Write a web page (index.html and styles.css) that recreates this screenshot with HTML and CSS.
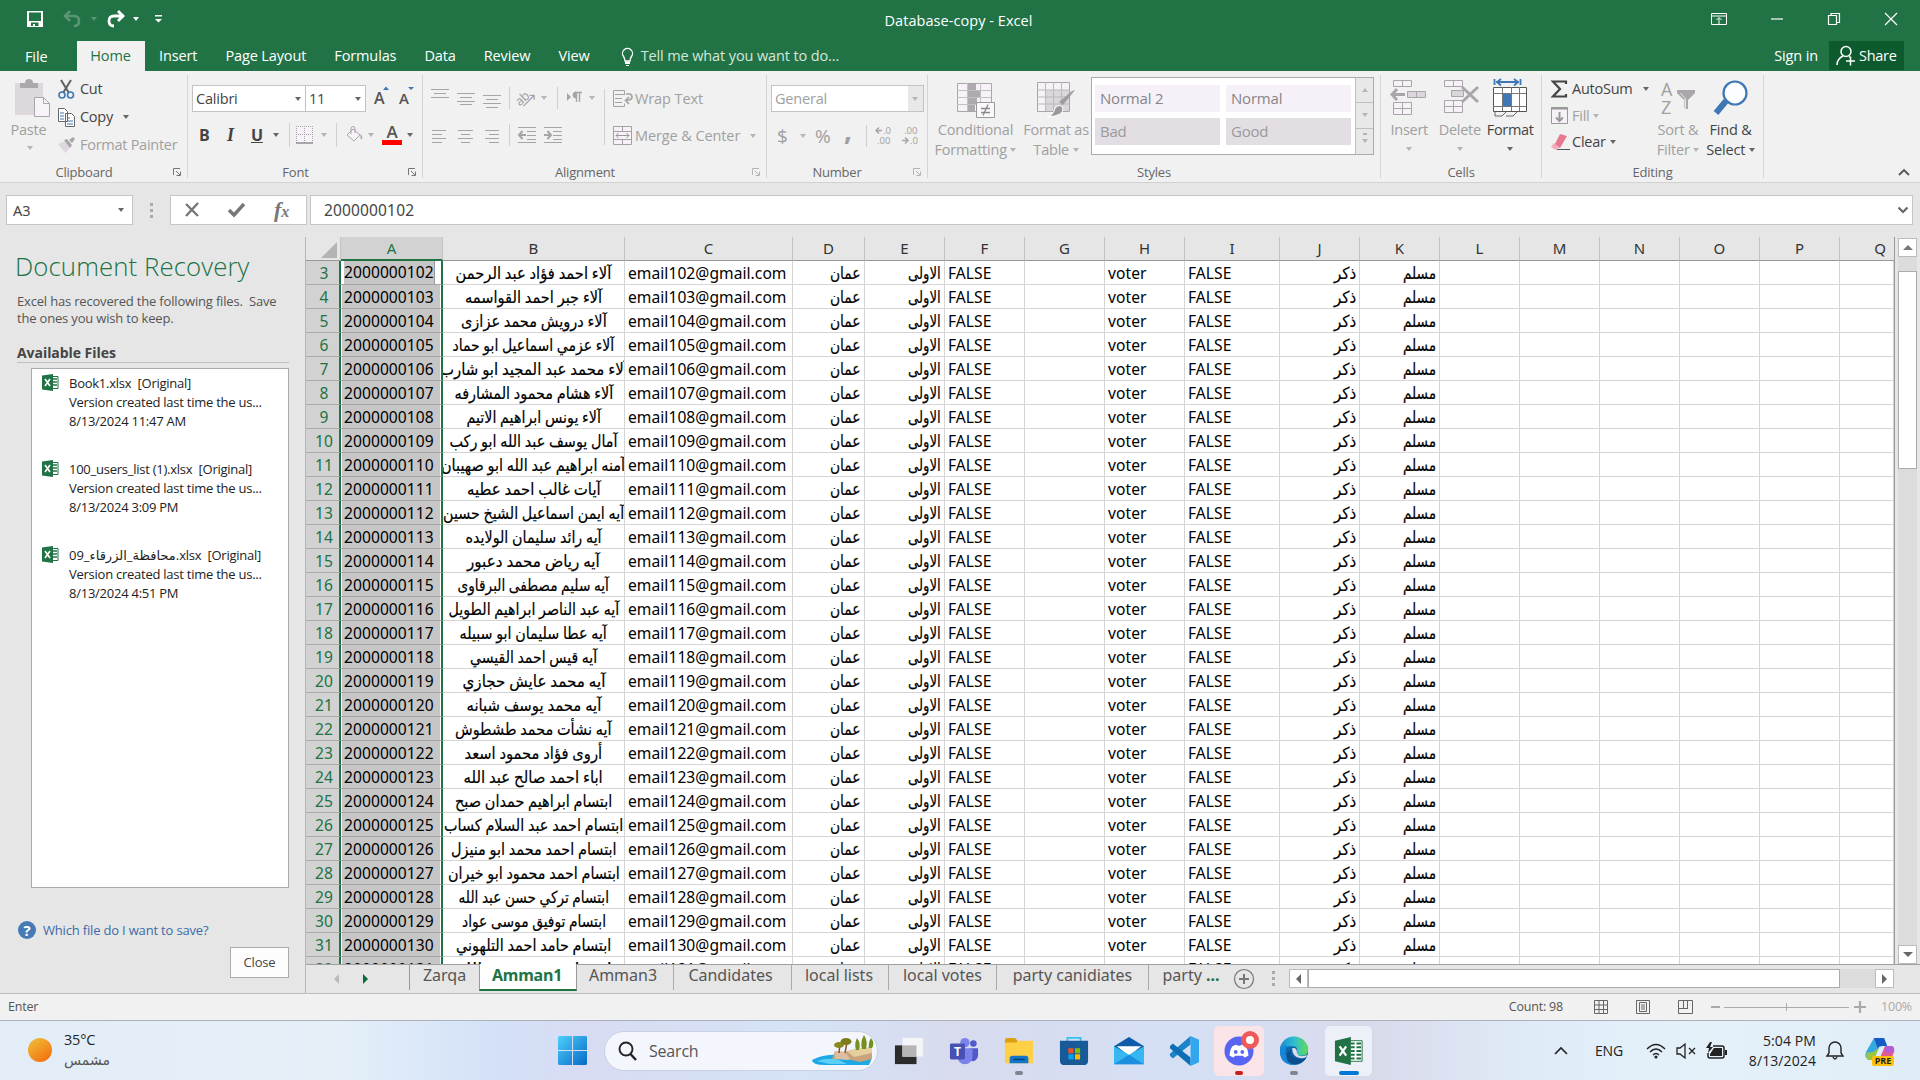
FILE: index.html
```html
<!DOCTYPE html>
<html lang="en">
<head>
<meta charset="utf-8">
<title>Database-copy - Excel</title>
<link rel="stylesheet" href="styles.css">
</head>
<body>
<header class="titlebar">
  <div class="quick">
    <svg width="16" height="16" viewBox="0 0 16 16"><path fill="#fff" fill-rule="evenodd" d="M0 0h16v16H0zM2 1.500v8.500h12V1.500zM4 11.500V15h2v-2h2v2h3.500v-3.500z"/></svg>
    <svg class="dim" width="18" height="16" viewBox="0 0 18 16"><path d="M1 5h10q5 0 5 5t-5 5M7 0L2 5l5 5" fill="none" stroke="#fff" stroke-width="2.600"/></svg>
    <i class="caret dim white"></i>
    <svg width="18" height="16" viewBox="0 0 18 16"><path d="M17 5H7Q2 5 2 10t5 5M11 0l5 5-5 5" fill="none" stroke="#fff" stroke-width="2.800"/></svg>
    <i class="caret white"></i>
    <svg width="7" height="8" viewBox="0 0 7 8"><path fill="#fff" d="M0 0h7v1.500H0zM0 4h7L3.500 7.500z"/></svg>
  </div>
  <div class="doc-title">Database-copy - Excel</div>
  <div class="window-buttons">
    <svg width="16" height="14" viewBox="0 0 16 14"><path d="M.5 1.500h15v11H.5zM.5 4h15M8 12V6M5.500 8L8 5.500 10.500 8" fill="none" stroke="#fff"/></svg>
    <svg width="14" height="14" viewBox="0 0 14 14"><path d="M1 7h12" stroke="#fff" stroke-width="1.200"/></svg>
    <svg width="14" height="14" viewBox="0 0 14 14"><path d="M1.500 3.500h8v9h-8zM4 3.500v-2h8.500v9H10" fill="none" stroke="#fff" stroke-width="1.200"/></svg>
    <svg width="14" height="14" viewBox="0 0 14 14"><path d="M1 1l12 12M13 1L1 13" stroke="#fff" stroke-width="1.200"/></svg>
  </div>
</header>

<nav class="tabs">
  <span class="file">File</span><span class="active">Home</span><span>Insert</span><span>Page Layout</span><span>Formulas</span><span>Data</span><span>Review</span><span>View</span>
  <span class="tell"><svg width="13" height="19" viewBox="0 0 13 19"><path d="M4 14q0-2.500-1.500-4.500A5 5 0 1 1 10.500 9.500Q9 11.500 9 14z" fill="none" stroke="#fff" stroke-width="1.300"/><path d="M4 14.500h5V17H4zM5 18h3v1H5z" fill="#fff"/></svg>Tell me what you want to do...</span>
  <span class="signin">Sign in</span>
  <span class="share"><svg width="21" height="21" viewBox="0 0 21 21"><g fill="none" stroke="#fff" stroke-width="1.500"><circle cx="10" cy="6.500" r="5"/><path d="M1 20q0-6 6-9M13 11.500l2 1.500M10 16h9M14.500 11.500v9"/></g></svg>Share</span>
</nav>

<section class="ribbon">
  <div class="group clipboard">
    <div class="body">
      <div class="big off paste">
        <svg width="36" height="40" viewBox="0 0 36 40"><path d="M0 4h28v32H0z" fill="#dcd8dc"/><path d="M5 9V4h5Q10 0 14 0t4 4h5v5z" fill="#ada8ad"/><path d="M19.500 18.500h9l6 6v13h-15z" fill="#f8f2f9" stroke="#aaa5ab"/><path d="M28.500 18.500v6h6" fill="none" stroke="#aaa5ab"/></svg>
        <span>Paste</span><i class="caret"></i>
      </div>
      <div class="clip-list">
        <div><svg width="17" height="19" viewBox="0 0 17 19"><path d="M3 0l8 13M13 0L5 13" stroke="#5f5f5f" stroke-width="2"/><g fill="none" stroke="#3f77b5" stroke-width="1.600"><circle cx="4" cy="15" r="3"/><circle cx="12.500" cy="15" r="3"/></g></svg>Cut</div>
        <div><svg width="17" height="19" viewBox="0 0 17 19"><path d="M.5.5h6l3 3v10h-9zM7.500 5.500h6l3 3v10h-9z" fill="#fff" stroke="#666"/><path d="M2 5h4M2 8h4M2 11h4M9 10h3M9 13h6M9 16h6" stroke="#3f77b5"/></svg>Copy <i class="caret"></i></div>
        <div class="off"><svg width="17" height="16" viewBox="0 0 17 16"><path d="M0 7l7-3 5 6-4 6Q4 13 0 7z" fill="#ddd8de"/><path d="M6 3l3-1 5 6-2 3zM11 3l4-3 2 2-3 4z" fill="#aaa5ab"/></svg>Format Painter</div>
      </div>
    </div>
    <div class="label">Clipboard</div><svg class="launcher" viewBox="0 0 8 8"><path d="M.5 7V.5H7M3 3l4 4M7.500 3.500v4h-4" fill="none" stroke="#777"/></svg>
  </div>

  <div class="group font">
    <div class="body">
      <div class="row combos"><div class="combo">Calibri<i class="caret"></i></div><div class="combo">11<i class="caret"></i></div>
        <svg width="16" height="22" viewBox="0 0 16 22"><text x="0" y="18" font-size="16" class="glyph">A</text><path d="M9 4l3-3.500L15 4z" fill="#3f77b5"/></svg>
        <svg width="16" height="22" viewBox="0 0 16 22"><text x="0" y="18" font-size="15" class="glyph">A</text><path d="M9 1l3 3 3-3z" fill="#3f77b5"/></svg>
      </div>
      <div class="row styles-row"><b>B</b><em>I</em><u>U</u><i class="caret"></i><s></s>
        <svg width="18" height="18" viewBox="0 0 18 18"><path fill="#f7f1f8" d="M0 0h18v17H0z"/><path d="M.5 0v17M8.500 0v17M16.500 0v17M0 .5h17M0 8.500h17" stroke="#a9a4aa" stroke-dasharray="1 1"/><path d="M0 17h17" stroke="#8f8f8f" stroke-width="1.500"/></svg><i class="caret pale"></i><s></s>
        <svg width="18" height="18" viewBox="0 0 18 18"><path d="M7 3l7 6-6 6-7-6z" fill="#f7f1f8" stroke="#a9a4aa"/><path d="M5 8V3q0-2.500 2-2.500T9 3v4" fill="none" stroke="#a9a4aa"/><path d="M14 8q4 3 1 6z" fill="#a9a4aa"/></svg><i class="caret pale"></i>
        <svg width="20" height="21" viewBox="0 0 20 21"><text x="10" y="13" text-anchor="middle" font-size="17" class="glyph">A</text><path d="M0 15h20v5H0z" fill="#f00"/></svg><i class="caret"></i>
      </div>
    </div>
    <div class="label">Font</div><svg class="launcher" viewBox="0 0 8 8"><path d="M.5 7V.5H7M3 3l4 4M7.500 3.500v4h-4" fill="none" stroke="#777"/></svg>
  </div>

  <div class="group alignment off">
    <div class="body">
      <div class="align-grid">
        <svg viewBox="0 0 18 26"><path d="M0 4.500h18M3 8.500h12M0 12.500h18"/></svg>
        <svg viewBox="0 0 18 26"><path d="M0 8.500h18M3 12.500h12M0 16.500h18M3 19.500h12"/></svg>
        <svg viewBox="0 0 18 26"><path d="M0 10.500h18M3 14.500h12M0 18.500h18M3 22.500h12"/></svg>
        <s></s>
        <svg viewBox="0 0 20 26"><text x="-3" y="16" font-size="14" transform="rotate(-42 8 13)" class="glyph-off">ab</text><path d="M6 22L18 10M18 15v-5h-5" stroke-width="1.400"/></svg><i class="caret"></i><s></s>
        <svg viewBox="0 0 18 26"><path d="M0 8l4 4-4 4z" fill="#a5a5a5" stroke="none"/><path d="M9.500 8v9M12.500 8v9M8 7.500h7" stroke-width="1.400"/><path d="M9 7a3 3 0 0 0 0 6z" fill="#a5a5a5"/></svg><i class="caret"></i>
        <svg viewBox="0 0 18 26"><path d="M1 8.500h14M1 12.500h10M1 16.500h14M1 20.500h10"/></svg>
        <svg viewBox="0 0 18 26"><path d="M1 8.500h15M4 12.500h9M1 16.500h15M4 20.500h9"/></svg>
        <svg viewBox="0 0 18 26"><path d="M2 8.500h14M6 12.500h10M2 16.500h14M6 20.500h10"/></svg>
        <s></s>
        <svg viewBox="0 0 18 26"><path d="M0 5.500h18M9 9.500h9M9 13.500h9M9 17.500h9M0 20.500h18"/><path d="M1 13h7M4.500 9L1 13l3.500 4" stroke-width="2"/></svg>
        <svg class="indent" viewBox="0 0 18 26"><path d="M0 5.500h18M9 9.500h9M9 13.500h9M9 17.500h9M0 20.500h18"/><path d="M0 13h7M3.500 9L7 13l-3.500 4" stroke-width="2"/></svg>
      </div>
      <s class="tall"></s>
      <div class="wrap-merge">
        <div><svg width="20" height="20" viewBox="0 0 20 20"><path d="M.5 1.500h11v4M.5 1.500v16h11v-3M2 5.500h10M2 9.500h7M2 13.500h7" fill="none" stroke="#a5a0a6"/><path d="M13 5h3q3 0 3 3t-5 3.500M16 8l-3.500 3.500L16 15" fill="none" stroke="#a5a5a5" stroke-width="1.700"/></svg>Wrap Text</div>
        <div><svg width="20" height="20" viewBox="0 0 20 20"><path d="M.5.5h18v18H.5zM.5 5.500h18M.5 13.500h18M9.500 0v5M9.500 14v5" fill="#f7f1f8" stroke="#a5a0a6"/><path d="M3 9.500h13M5.500 7L3 9.500 5.500 12M13.500 7L16 9.500 13.500 12" fill="none" stroke="#999"/></svg>Merge &amp; Center<i class="caret"></i></div>
      </div>
    </div>
    <div class="label">Alignment</div><svg class="launcher" viewBox="0 0 8 8"><path d="M.5 7V.5H7M3 3l4 4M7.500 3.500v4h-4" fill="none" stroke="#b5b5b5"/></svg>
  </div>

  <div class="group number off">
    <div class="body">
      <div class="combo general">General<span><i class="caret"></i></span></div>
      <div class="row num-row"><span>$</span><i class="caret"></i><span>%</span><strong>,</strong><s></s>
        <svg width="17" height="20" viewBox="0 0 17 20"><g class="glyph-off" font-size="9.500"><text x="8" y="8">.0</text><text x="2" y="18">.00</text></g><path d="M1 4.500h6M4 1.500l-3 3 3 3" fill="none" stroke="#a5a5a5" stroke-width="1.500"/></svg>
        <svg width="17" height="20" viewBox="0 0 17 20"><g class="glyph-off" font-size="9.500"><text x="2" y="8">.00</text><text x="8" y="18">.0</text></g><path d="M0 14.500h6M3 11.500l3 3-3 3" fill="none" stroke="#a5a5a5" stroke-width="1.500"/></svg>
      </div>
    </div>
    <div class="label">Number</div><svg class="launcher" viewBox="0 0 8 8"><path d="M.5 7V.5H7M3 3l4 4M7.500 3.500v4h-4" fill="none" stroke="#b5b5b5"/></svg>
  </div>

  <div class="group stylesg">
    <div class="body">
      <div class="big off cf"><svg width="38" height="36" viewBox="0 0 38 36"><path d="M.5.5h34v28H.5z" fill="#f7f1f8" stroke="#aaa5ab"/><path d="M11 1h8v6h-8zM11 8h12v6H11zM11 15h9v6h-9zM11 22h7v6h-7z" fill="#aeaaaf"/><path d="M0 7.500h34M0 14.500h34M0 21.500h34M10.500 0v28M23.500 0v28" stroke="#c5c0c6"/><path d="M19.500 19.500h18v15h-18z" fill="#fbf8fb" stroke="#999"/><path d="M24 25.500h9M24 29.500h9M31 21.500l-5 11" stroke="#888" stroke-width="1.300"/></svg><span>Conditional<br>Formatting <i class="caret"></i></span></div>
      <div class="big off ft"><svg width="38" height="36" viewBox="0 0 38 36"><path d="M.5.5h32v29H.5z" fill="#f7f1f8" stroke="#aaa5ab"/><path d="M8 8h24v21H8z" fill="#dbd6dc"/><path d="M0 8h32M0 15h32M0 22h32M8.500 0v29M16.500 0v29M24.500 0v29" stroke="#bdb8be"/><path d="M38 8L26 23l-4-3L35 9z" fill="#a09ba1"/><path d="M10 35q6-1 8-9 5-5 8 0 1 8-16 9z" fill="#999" stroke="#fff"/></svg><span>Format as<br>Table <i class="caret"></i></span></div>
      <div class="gallery"><div class="swatches"><span>Normal 2</span><span>Normal</span><span class="shade">Bad</span><span class="shade">Good</span></div>
        <div class="strip"><span><i class="caret up"></i></span><span><i class="caret"></i></span><span><i class="caret more"></i></span></div></div>
    </div>
    <div class="label">Styles</div>
  </div>

  <div class="group cells">
    <div class="body">
      <div class="big off"><svg width="38" height="38" viewBox="0 0 38 38"><path d="M3.500 1.500h18v6h-18zM12.500 1v7M3.500 23.500h18v12h-18zM3 29.500h18M12.500 23v13" fill="#f7f1f8" stroke="#aaa5ab"/><path d="M17.500 12.500h18v6h-18zM26.500 12v7" fill="#dbd6dc" stroke="#aaa5ab"/><path d="M2 15.500h13M7 10l-5 5.500L7 21" fill="none" stroke="#aaa5ab" stroke-width="3"/></svg><span>Insert</span><i class="caret"></i></div>
      <div class="big off"><svg width="38" height="38" viewBox="0 0 38 38"><path d="M3.500 1.500h18v6h-18zM12.500 1v7M3.500 21.500h18v12h-18zM3 27.500h18M12.500 21v13" fill="#f7f1f8" stroke="#aaa5ab"/><path d="M10.500 11.500h12v6h-12z" fill="#dbd6dc" stroke="#aaa5ab"/><path d="M21 8l16 15M37 8L21 23" fill="none" stroke="#aaa5ab" stroke-width="3"/></svg><span>Delete</span><i class="caret"></i></div>
      <div class="big"><svg width="38" height="38" viewBox="0 0 38 38"><path d="M3.500 0v6M29.500 0v6M5 3h23M10 0L6 3l4 3.500M23 0l4 3-4 3.500" fill="none" stroke="#3f77b5" stroke-width="1.800"/><path d="M2.500 8.500h33v24h-33z" fill="#fff" stroke="#555"/><path d="M2 14.500h33M2 27.500h33M11.500 8v24M20.500 8v24M28.500 8v24" stroke="#777"/><path d="M12 15h8v12h-8z" fill="#3f77b5"/><path d="M4 33v4h7l4-4M15 37h7l4-4" fill="none" stroke="#666"/></svg><span>Format</span><i class="caret"></i></div>
    </div>
    <div class="label">Cells</div>
  </div>

  <div class="group editing">
    <div class="body">
      <div class="edit-list">
        <div><svg width="18" height="18" viewBox="0 0 18 18"><path d="M15 4V1.500H2L9 9l-7 7.500h13V14" fill="none" stroke="#444" stroke-width="2.200"/></svg>AutoSum<i class="caret wide"></i></div>
        <div class="off"><svg width="18" height="18" viewBox="0 0 18 18"><path d="M.5.5h16v16H.5z" fill="#f7f1f8" stroke="#999"/><path d="M0 1.500h17" stroke="#999" stroke-width="2"/><path d="M8.500 5v9M5 10.500L8.500 14l3.500-3.500" fill="none" stroke="#999" stroke-width="2"/></svg>Fill<i class="caret"></i></div>
        <div><svg width="20" height="18" viewBox="0 0 20 18"><path d="M9 1l7 2-7 12-6-2z" fill="#e8788e"/><path d="M3 10l-3 4 5 3 3-3z" fill="#f3a9b7"/><path d="M6 16.500h13" stroke="#555"/></svg>Clear<i class="caret"></i></div>
      </div>
      <div class="big off sort"><svg width="37" height="36" viewBox="0 0 37 36"><text x="1" y="15" font-size="18" class="glyph-off">A</text><text x="1" y="33" font-size="18" class="glyph-off">Z</text><path d="M17 9h18v3l-7 7v9h-4v-9l-7-7z" fill="#aaa6ab"/><path d="M24 18v9l1.500 1V18l-5-6" stroke="#e5e5e5" fill="none"/></svg><span>Sort &amp;<br>Filter <i class="caret"></i></span></div>
      <div class="big find"><svg width="36" height="36" viewBox="0 0 36 36"><path d="M13 21L3 33" stroke="#3f77b5" stroke-width="6"/><circle cx="22" cy="13" r="11.500" fill="#fbfdff" stroke="#3f77b5" stroke-width="2.200"/></svg><span>Find &amp;<br>Select <i class="caret"></i></span></div>
    </div>
    <div class="label">Editing</div>
  </div>
  <svg class="collapse" width="12" height="8" viewBox="0 0 12 8"><path d="M1 7l5-5 5 5" fill="none" stroke="#555" stroke-width="1.800"/></svg>
</section>

<section class="formula-bar">
  <div class="name-box">A3<i class="caret"></i></div>
  <div class="grip"><i></i><i></i><i></i></div>
  <div class="fx-buttons">
    <svg width="16" height="16" viewBox="0 0 16 16"><path d="M2 2l12 12M14 1L2 14" stroke="#777" stroke-width="2.400"/></svg>
    <svg width="18" height="16" viewBox="0 0 18 16"><path d="M1 8l5 5L16 2" fill="none" stroke="#777" stroke-width="3.400"/></svg>
    <span class="fx">f<small>x</small></span>
  </div>
  <div class="formula">2000000102<svg width="12" height="8" viewBox="0 0 12 8"><path d="M1.500 1.500L6 6l4.500-4.500" fill="none" stroke="#666" stroke-width="2.200"/></svg></div>
</section>

<main class="workspace">
  <aside class="recovery">
    <h1>Document Recovery</h1>
    <p>Excel has recovered the following files.&nbsp; Save<br>the ones you wish to keep.</p>
    <h2>Available Files</h2>
    <ul id="files"></ul>
    <div class="help"><b>?</b>Which file do I want to save?</div>
    <button>Close</button>
  </aside>
  <section class="sheet">
    <div class="grid-area">
      <table class="grid">
        <colgroup><col class="c-head"><col class="c-a"><col class="c-b"><col class="c-c"><col class="c-d"><col span="4" class="c-std"><col class="c-i"><col span="7" class="c-std"><col class="c-q"></colgroup>
        <thead><tr><th class="corner"></th><th class="sel">A</th><th>B</th><th>C</th><th>D</th><th>E</th><th>F</th><th>G</th><th>H</th><th>I</th><th>J</th><th>K</th><th>L</th><th>M</th><th>N</th><th>O</th><th>P</th><th class="last">Q</th></tr></thead>
        <tbody id="rows"></tbody>
      </table>
      <div class="vscroll"><span class="btn"><i class="caret up"></i></span><div class="track"><div class="thumb"></div></div><span class="btn"><i class="caret"></i></span></div>
    </div>
    <div class="sheet-tabs">
      <div class="arrows"><i class="prev"></i><i class="next"></i></div>
      <span class="t1">Zarqa</span><span class="on">Amman1</span><span class="t2">Amman3</span><span class="t3">Candidates</span><span class="t4">local lists</span><span class="t5">local votes</span><span class="t6">party canidiates</span><span class="t7">party <b>...</b></span>
      <svg class="plus" width="22" height="22" viewBox="0 0 22 22"><circle cx="11" cy="11" r="9.500" fill="none" stroke="#777" stroke-width="1.200"/><path d="M11 6v10M6 11h10" stroke="#777" stroke-width="2"/></svg>
      <div class="grip"><i></i><i></i><i></i></div>
      <div class="hscroll"><span class="btn"><i class="prev"></i></span><div class="thumb"></div><span class="btn end"><i class="next"></i></span></div>
    </div>
  </section>
</main>

<footer class="status">
  <span>Enter</span>
  <span class="count">Count: 98</span>
  <svg width="15" height="15" viewBox="0 0 15 15"><path d="M.5.5h13v13H.5zM5 0v14M9.500 0v14M0 5h14M0 9.500h14" fill="none" stroke="#666"/></svg>
  <svg width="15" height="15" viewBox="0 0 15 15"><path d="M.5.5h13v13H.5zM3.500 2.500h7v9h-7zM5 5h4M5 7h4M5 9h4" fill="none" stroke="#666"/></svg>
  <svg width="15" height="15" viewBox="0 0 15 15"><path d="M.5.5h14v13H.5zM5.500 0v8.500M9.500 0v8.500M0 8.500h10" fill="none" stroke="#666"/></svg>
  <svg class="zoom" width="156" height="14" viewBox="0 0 156 14"><path d="M0 7h9M143 7h12M149 1v12" stroke="#aaa" stroke-width="2.200"/><path d="M13 7.500h125M75.500 3v8" stroke="#aaa"/></svg>
  <span class="pct">100%</span>
</footer>

<footer class="taskbar">
  <div class="weather"><i class="sun"></i><div><div>35°C</div><small>مشمس</small></div></div>
  <svg class="start" width="29" height="29" viewBox="0 0 29 29"><defs><linearGradient id="w" x1="0" y1="0" x2="1" y2="1"><stop offset="0" stop-color="#4fd0fb"/><stop offset="1" stop-color="#0569c8"/></linearGradient></defs><path fill="url(#w)" d="M1 0h13v14H0V1zM15 0h13l1 1v13H15zM0 15h14v14H1l-1-1zM15 15h14v13l-1 1H15z"/></svg>
  <div class="search"><svg width="20" height="20" viewBox="0 0 20 20"><circle cx="8" cy="8" r="6.500" fill="none" stroke="#222" stroke-width="1.900"/><path d="M12.500 13l5.500 6" stroke="#222" stroke-width="2.400"/></svg>Search
    <svg class="scene" width="64" height="31" viewBox="0 0 64 31"><path d="M1 25Q12 19 30 20l31 3-3 7H14Q1 30 1 25z" fill="#1da9e6"/><path d="M6 26q12-4 22-1l8 4H18z" fill="#5cd0f5"/><path d="M21 24l3-8 10 1 6-2 21-3v12l-12 3-13-3z" fill="#c9a37c"/><path d="M36 16l25-4v6l-18 4z" fill="#e5cf9d"/><path d="M24 16l10 1 5 7-2 1-13-1z" fill="#dcbfa0"/><path d="M45 15q-2-6 1-12 4 5 2 12zM51 14q-2-7 2-14 4 6 2 14zM58 13q-1-5 2-10 4 5 1 10z" fill="#75901e"/><path d="M28 18l1-9M34 18l2-11" stroke="#8a4f25" stroke-width="1.500"/><ellipse cx="28" cy="10" rx="5" ry="3" fill="#87891f"/><ellipse cx="35" cy="6.500" rx="5.500" ry="3.500" fill="#7b7d1c"/></svg></div>
  <div class="apps">
    <div><svg viewBox="0 0 32 32"><path d="M1 10h23v20H1z" fill="#2b2b2b"/><path d="M9 2h22v20H9z" fill="#f4f5f7"/><path d="M9 10h15v12H9z" fill="#b5b5b5"/></svg></div>
    <div><svg viewBox="0 0 32 32"><circle cx="17" cy="7" r="5" fill="#7b83eb"/><circle cx="26" cy="8" r="3.500" fill="#5059c9"/><path d="M22 13h9v8q-1 6-7 6z" fill="#5059c9"/><path d="M9 13h16v9q-1 8-8 8t-8-8z" fill="#7b83eb"/><rect x="1" y="8" width="16" height="17" rx="1.500" fill="#4650b5"/><text x="9" y="21" text-anchor="middle" font-size="13" font-weight="700" fill="#fff">T</text></svg></div>
    <div class="run"><svg viewBox="0 0 32 32"><path d="M1 4q0-2 2-2h9l3 4h14q2 0 2 2v4H1z" fill="#dfa010"/><path d="M1 7h12l3-2h15v24H1z" fill="#ffcf45"/><path d="M6 29v-5q0-3 3-3h14q3 0 3 3v5z" fill="#1376c9"/><path d="M10 25h12" stroke="#083f78" stroke-width="1.500"/></svg></div>
    <div><svg viewBox="0 0 32 32"><path d="M9 6V2h14v4" fill="none" stroke="#31c4f5" stroke-width="2"/><path d="M1 5h30v21q0 5-5 5H6q-5 0-5-5z" fill="#185a98"/><path d="M10 13h5.500v5.500H10z" fill="#f25022"/><path d="M17 13h5.500v5.500H17z" fill="#7fba00"/><path d="M10 19.500h5.500V25H10z" fill="#00a4ef"/><path d="M17 19.500h5.500V25H17z" fill="#ffb900"/></svg></div>
    <div><svg viewBox="0 0 32 32"><path d="M0 11L16 1l16 10v10H0z" fill="#0f5baa"/><path d="M3 11h26L16 21z" fill="#fff"/><path d="M0 11l16 9 16-9v19H0z" fill="#35b8f1"/><path d="M16 20l16 10H0z" fill="#1c8fe0"/></svg></div>
    <div><svg viewBox="0 0 32 32"><path d="M23 0v9L4 24l-3-3v-2L23 0z" fill="#1b84c9"/><path d="M23 32v-9L4 8l-3 3v2l22 19z" fill="#0f6fb5"/><path d="M23 0l9 4v24l-9 4z" fill="#30a7ef"/></svg></div>
    <div class="discord run"><svg viewBox="0 0 32 32"><circle cx="16" cy="16" r="15.500" fill="#5865f2"/><path d="M9 11q3-2 5-1.500l.5 1h3l.5-1q2-.5 5 1.500 3 4 3 10l-4 2-2-2h-8l-2 2-4-2q0-6 3-10z" fill="#fff"/><circle cx="12.500" cy="17" r="2" fill="#5865f2"/><circle cx="19.500" cy="17" r="2" fill="#5865f2"/></svg><i class="rec"></i></div>
    <div class="run"><svg viewBox="0 0 32 32"><defs><linearGradient id="e" x1="0" x2="1"><stop offset="0" stop-color="#1689d0"/><stop offset=".5" stop-color="#31bdd4"/><stop offset="1" stop-color="#60dc56"/></linearGradient></defs><circle cx="16" cy="16" r="15" fill="#0d67ad"/><path d="M1 16A15 15 0 0 1 31 15q0 6-7 6-7 0-5-4 2-6-5-6Q5 11 1 16z" fill="url(#e)"/><path d="M1 16q2-6 8-6-6 12 5 18l3 3Q1 31 1 16z" fill="#1686d8"/><path d="M14 14q-3 4 1 8 5 4 14 1-3 7-13 7-8-1-8-8 0-6 6-8z" fill="#0b4f8c"/><path d="M14 13q5-1 5 4 0 4 5 4.500l6-1q-1 4-8 3-8-2-8-10.500z" fill="#d9def0"/></svg></div>
    <div class="excel run"><svg viewBox="0 0 32 32"><path d="M16 5h14v22H16z" fill="#fff" stroke="#217346"/><path d="M18 8h4M18 12h4M18 16h4M18 20h4M18 24h4M24 8h5M24 12h5M24 16h5M24 20h5M24 24h5" stroke="#217346" stroke-width="2"/><path d="M1 5l17-4v30L1 27z" fill="#217346"/><path d="M6 11l7 10M13 11L6 21" stroke="#fff" stroke-width="2.400"/></svg></div>
  </div>
  <div class="tray">
    <svg class="chev" width="14" height="10" viewBox="0 0 14 10"><path d="M1 8l6-6 6 6" fill="none" stroke="#222" stroke-width="1.600"/></svg>
    <span class="lang">ENG</span>
    <svg class="wifi" width="20" height="16" viewBox="0 0 20 16"><g fill="none" stroke="#222" stroke-width="1.500"><path d="M1 6q9-9 18 0M4 9q6-6 12 0M7 12q3-3 6 0"/></g><circle cx="10" cy="14" r="1.600" fill="#222"/></svg>
    <svg class="mute" width="20" height="16" viewBox="0 0 20 16"><path d="M1 5h3l5-4v14l-5-4H1zM13 5l6 6M19 5l-6 6" fill="none" stroke="#222" stroke-width="1.300"/></svg>
    <svg class="batt" width="22" height="18" viewBox="0 0 22 18"><path d="M7 4h9q2 0 2 2v8q0 2-2 2H4q-2 0-2-2v-3" fill="none" stroke="#222" stroke-width="1.500"/><path d="M8 6h8v8H4v-2zM19 8h2v5h-2z" fill="#222"/><path d="M4 0L0 6h3l-1 5 5-6H4l2-5z" fill="#222"/></svg>
    <div class="clock">5:04 PM<br>8/13/2024</div>
    <svg class="bell" width="18" height="20" viewBox="0 0 18 20"><path d="M1 15l2-3V7a6 6 0 0 1 12 0v5l2 3zM7 16q2 4 4 0" fill="none" stroke="#222" stroke-width="1.400"/></svg>
    <div class="copilot"><svg width="30" height="28" viewBox="0 0 30 28"><path d="M9 1h10l3 7-8 2-5 12H4q-5 0-3-7z" fill="#35a8df"/><path d="M2 15q7 2 12-5l-5 13H4q-4 0-2-8z" fill="#9bc63d"/><path d="M9 1h10l3 8h-4q-4-1-5 3z" fill="#1759c5"/><path d="M20 9h6q4 0 3 6l-3 8H14z" fill="#e35b8e"/><path d="M20 9h6q4 0 3 6l-8 1z" fill="#b45bdc"/></svg><b>PRE</b></div>
  </div>
</footer>
<script src="script.js"></script>
</body>
</html>
```

FILE: styles.css
```css
* { box-sizing: border-box; }
body { margin: 0; width: 1920px; height: 1080px; overflow: hidden; font: 14.500px/18px "Open Sans", "Noto Sans", "DejaVu Sans", sans-serif; letter-spacing: -.2px; color: #444; background: #e6e6e6; display: flex; flex-direction: column; }
svg { display: block; flex: none; overflow: visible; }
.glyph { fill: #555; letter-spacing: 0; font-family: "Open Sans", sans-serif; font-weight: 600; }
.glyph-off { fill: #a0a0a0; stroke: none; letter-spacing: 0; }
.caret { display: inline-block; flex: none; width: 0; height: 0; border: 3.500px solid transparent; border-top: 4px solid #666; border-bottom: 0; }
.caret.up { border-top: 0; border-bottom: 4px solid #777; }
.caret.white { border-top-color: #fff; }
.off { color: #a0a0a0; }
.off .caret, .caret.pale { border-top-color: #b5b5b5; }
.dim { opacity: .25; }

.titlebar { flex: none; height: 41px; background: #217346; color: #fff; display: flex; align-items: center; justify-content: space-between; }
.quick { width: 400px; padding-left: 27px; display: grid; grid-template-columns: 36px 28px 16px 26px 22px auto; align-items: center; justify-content: start; padding-bottom: 3px; }
.doc-title { letter-spacing: .05px; padding-right: 1px; }
.window-buttons { width: 402px; display: flex; justify-content: flex-end; gap: 43px; padding: 0 22px 3px 0; }

.tabs { flex: none; height: 30px; background: #217346; color: #fff; display: flex; align-items: stretch; line-height: 30px; letter-spacing: -.12px; }
.tabs > span { padding: 0 14px; }
.tabs .file { width: 77px; padding: 1px 0 0 25px; }
.tabs .active { background: #f1f1f1; color: #217346; width: 68px; padding: 0 1px 0 0; text-align: center; }
.tabs .tell { display: flex; align-items: center; gap: 7px; color: #d5e6dc; padding-left: 17px; }
.tabs .signin { margin-left: auto; padding: 0 11px; }
.tabs .share { background: #0e5a2f; width: 75px; margin: 0 16px 1px 0; padding: 0 0 0 7px; display: flex; align-items: center; gap: 2px; letter-spacing: -.3px; }

.ribbon { flex: none; height: 112px; background: #f1f1f1; border-bottom: 1px solid #d2d2d2; display: flex; }
.group { position: relative; height: 103px; margin-top: 4px; border-right: 1px solid #d4d4d4; display: flex; flex-direction: column; }
.group .body { height: 88px; flex: none; display: flex; align-items: flex-start; }
.group .label { text-align: center; font-size: 13px; line-height: 18px; color: #666; }
.launcher { position: absolute; right: 6px; bottom: 2px; width: 8px; height: 8px; }
.ribbon s { width: 1px; height: 22px; background: #d0d0d0; }
.big { display: flex; flex-direction: column; align-items: center; text-align: center; line-height: 20px; white-space: nowrap; }
.big .caret { vertical-align: 3px; }
.clipboard { width: 188px; }
.clipboard .label { padding-right: 19px; }
.font .label { padding-right: 19px; }
.number .label { padding-right: 20px; }
.alignment .label { padding-right: 19px; }
.paste { width: 58px; padding: 4px 0 0 7px; }
.paste span { margin: 1px 0 6px -8px; }
.paste .caret { margin-left: -6px; }
.clip-list > div { display: grid; grid-template-columns: 22px auto auto; align-items: center; justify-content: start; height: 28px; letter-spacing: -.27px; }
.clip-list .caret { margin-left: 10px; }
.font { width: 235px; }
.font .body, .number .body { flex-direction: column; padding-top: 10px; padding-left: 4px; }
.combo { background: #fff; border: 1px solid #c3c3c3; height: 27px; display: flex; align-items: center; justify-content: space-between; padding: 0 4px 0 3px; }
.combos { display: grid; grid-template-columns: 114px 60px 16px 16px; align-items: start; }
.combos .combo + .combo { margin-left: -1px; }
.combos svg { margin: 1px 0 0 8px; }
.combos svg + svg { margin-left: 17px; }
.styles-row { display: grid; height: 26px; margin-top: 10px; padding-left: 7px; grid-template-columns: 28px 24px 22px 16px 7px 25px 15px 10px 22px 14px 25px auto; align-items: center; justify-content: start; font-size: 16px; }
.styles-row em { font-family: "Liberation Serif", serif; font-weight: bold; font-size: 18px; }
.styles-row u { font-weight: bold; }
.styles-row s { height: 24px; }
.alignment { width: 344px; }
.alignment .body { padding: 10px 0 0 8px; }
.align-grid { width: 173px; display: grid; grid-template: 26px 26px / 26px 26px 26px 9px 23px 16px 10px 22px 15px; row-gap: 11px; align-items: center; }
.align-grid svg { width: 18px; height: 26px; fill: none; stroke: #a5a5a5; }
.align-grid .indent { margin-left: 3px; }
.tall.tall { height: 56px; margin-top: 4px; }
.wrap-merge { margin-left: 8px; }
.wrap-merge div { display: flex; align-items: center; gap: 2px; height: 27px; margin-bottom: 10px; white-space: nowrap; letter-spacing: -.1px; }
.wrap-merge .caret { margin-left: 8px; }
.number { width: 161px; }
.combo.general { width: 153px; padding-right: 0; }
.general span { background: #e8e8e8; width: 15px; height: 25px; padding: 10px 4px; line-height: 0; }
.num-row { display: grid; grid-template: 26px / 23px 15px 29px 22px 9px 27px auto; height: 26px; margin-top: 11px; padding-left: 6px; align-items: center; justify-content: start; font-size: 19px; line-height: 24px; }
.num-row strong { font-size: 28px; height: 26px; line-height: 12px; }
.stylesg { width: 453px; }
.cf { width: 95px; padding: 8px 0 0 0; }
.cf > span { margin-top: 1px; }
.ft { width: 68px; padding: 7px 2px 0 0; }
.ft > span { margin-top: 2px; }
.gallery { width: 283px; height: 78px; margin-top: 2px; background: #fff; border: 1px solid #ababab; display: flex; font-size: 15px; }
.swatches { width: 263px; padding: 7px 3px; display: grid; grid-template: 27px 27px / 125px 125px; gap: 6px; line-height: 27px; }
.swatches span { background: #f6f1f8; padding-left: 5px; color: #858585; }
.swatches .shade { background: #e3dee3; color: #9a9a9a; }
.strip { width: 18px; border-left: 1px solid #c0c0c0; background: #e8e8e8; display: grid; grid-template-rows: 1fr 1fr 1fr; }
.strip span { display: grid; place-items: center; border-bottom: 1px solid #c0c0c0; }
.strip span:last-child { border: 0; }
.strip .caret { border-top-color: #b5b5b5; }
.strip .up { border-bottom-color: #b5b5b5; border-top: 0; }
.strip .more { box-shadow: 0 -6px 0 -2px #f1f1f1, 0 -7px 0 -1px #b5b5b5; }
.cells { width: 161px; }
.cells .body { padding: 4px 0 0 3px; }
.cells .big { width: 50.500px; }
.cells .big span { margin: 3px 0 7px; letter-spacing: -.3px; }
.editing { width: 222px; }
.edit-list { width: 112px; padding: 0 0 0 9px; }
.edit-list > div { display: grid; grid-template-columns: 21px auto auto; height: 27px; align-items: center; justify-content: start; letter-spacing: -.25px; }
.edit-list > div:last-child { height: 25px; }
.edit-list .caret { margin-left: 4px; }
.edit-list .wide { margin-left: 11px; }
.sort { width: 48px; padding-top: 6px; }
.find { width: 56px; padding: 5px 0 0 1px; }
.sort > span { margin-top: 3px; }
.find > span { margin-top: 4px; }
.collapse { margin: 97px 0 0 134px; }

.formula-bar { flex: none; height: 54px; padding: 12px 7px 0 6px; display: flex; font: 15.500px "Noto Sans", sans-serif; letter-spacing: 0; }
.formula-bar > div:not(.grip) { height: 30px; background: #fff; border: 1px solid #c6c6c6; display: flex; align-items: center; }
.formula-bar .name-box { width: 127px; justify-content: space-between; padding: 0 8px 0 6px; font-size: 14.500px; }
.grip { display: grid; align-content: center; gap: 3px; }
.grip i { width: 3px; height: 3px; background: #aaa; }
.formula-bar .grip { width: 37px; height: 30px; padding-left: 17px; }
.fx-buttons { width: 137px; padding-left: 13px; gap: 28px; }
.fx { font: italic bold 22px "Liberation Serif", serif; color: #777; }
.fx small { font-size: 16px; }
.formula { flex: 1; margin-left: 3px; padding: 0 3px 0 13px; justify-content: space-between; letter-spacing: .15px; }

.workspace { flex: none; height: 757px; display: flex; border-bottom: 1px solid #bdbdbd; }
.recovery { width: 305px; padding: 13px 16px 0 17px; display: flex; flex-direction: column; font-size: 13px; line-height: 17px; color: #555; letter-spacing: -.18px; }
.recovery h1 { margin: 0 0 0 -2px; font-size: 25.800px; line-height: 32px; font-weight: 300; color: #217346; letter-spacing: .08px; white-space: nowrap; }
.recovery p { margin: 11px 0 0; height: 34px; white-space: nowrap; }
.recovery h2 { margin: 17px 0 0; font-size: 14px; line-height: 18px; letter-spacing: -.05px; border-bottom: 1px solid #c0c0c0; color: #444; }
.recovery ul { list-style: none; margin: 5px 0 0 14px; height: 520px; background: #fff; border: 1px solid #ababab; padding: 5px 11px; color: #222; letter-spacing: -.25px; }
.recovery li { display: flex; gap: 9px; height: 86px; line-height: 19px; white-space: nowrap; }
.recovery li svg { margin-left: -1px; }
.recovery li div { padding-left: 1px; }
.help { margin-top: 33px; padding-left: 1px; display: flex; align-items: center; gap: 7px; color: #3b6ca8; }
.help b { width: 18px; height: 18px; border-radius: 50%; background: #457ab5; color: #fff; text-align: center; line-height: 18px; font-size: 15px; }
.recovery button { align-self: flex-end; margin-top: 8px; width: 59px; height: 31px; padding: 0; background: #fdfdfd; border: 1px solid #ababab; font: inherit; letter-spacing: inherit; color: #444; }

.sheet { flex: 1; border-left: 1px solid #b5b5b5; }
.grid-area { height: 727px; display: flex; overflow: hidden; width: 1614px; }
.grid { flex: none; width: 1589px; border-collapse: separate; border-spacing: 0; table-layout: fixed; font: 15.600px "Noto Sans", "DejaVu Sans", sans-serif; color: #000; letter-spacing: .05px; border-right: 1px solid #999; }
.c-head { width: 35px; } .c-a { width: 102px; } .c-b { width: 182px; } .c-c { width: 168px; } .c-d { width: 72px; } .c-std { width: 80px; } .c-i { width: 95px; }
.grid th, .grid td { height: 24px; padding: 0 3px; border-right: 1px solid #d4d4d4; border-bottom: 1px solid #d4d4d4; overflow: hidden; white-space: nowrap; line-height: 22px; }
.grid thead th { font-weight: 400; color: #333; border-color: #999; border-right-color: #c3c3c3; background: #e6e6e6; font-size: 15px; line-height: 20px; padding-bottom: 2px; }
.grid thead th.sel { background: #d2d2d2; color: #217346; border-bottom: 2px solid #217346; padding-bottom: 1px; }
.grid thead th.last { text-align: right; padding-right: 8px; border-right: 0; }
.grid .corner { padding: 0 2px; }
.corner::after { content: ""; display: block; margin: 2px 0 0 13px; border-left: 16px solid transparent; border-bottom: 16px solid #b4b4b4; width: 0; }
.grid tbody { background: #fff; }
.grid tbody th { font-weight: 400; background: #d2d2d2; color: #217346; border-bottom-color: #ababab; border-right: 2px solid #217346; padding: 0 0 0 3px; }
.grid td.id { background: #c6c6c6; border-right: 2px solid #217346; border-bottom-color: #a6a6a6; box-shadow: inset 1px 0 #fff, inset -1px 0 #fff; padding: 0 0 0 3px; }
.grid td.edit { background: #fff; }
.edit span { background: #c6c6c6; border-right: 1px solid #999; display: inline-block; height: 23px; }
.grid td.rtl { text-align: right; }
.rtl span { display: inline-block; direction: rtl; transform-origin: right center; }
.grid td.name { padding: 0; }
.name div { display: flex; justify-content: center; }
.name span { flex: none; direction: rtl; }
.name span, .rtl span { font-size: 16.500px; line-height: 22px; height: 22px; vertical-align: top; -webkit-text-stroke: .2px #000; }
.vscroll { width: 22px; margin-left: auto; padding-top: 1px; display: flex; flex-direction: column; }
.btn { width: 19px; height: 19px; background: #fff; border: 1px solid #bbb; display: grid; place-items: center; }
.vscroll .caret { border-width: 5px; border-bottom-width: 0; }
.vscroll .up { border-width: 0 5px 5px; }
.track { width: 19px; flex: 1; background: #dcdcdc; padding-top: 14px; }
.track .thumb { height: 198px; background: #fff; border: 1px solid #ababab; }

.sheet-tabs { height: 29px; display: flex; width: 1614px; font: 16px/20px "Noto Sans", sans-serif; letter-spacing: 0; color: #555; border-top: 1px solid #a0a0a0; }
.arrows { width: 103px; height: 27px; display: flex; align-items: center; padding-left: 28px; gap: 24px; }
.prev, .next { border: 5px solid transparent; border-right: 5px solid #bbb; border-left: 0; }
.next { border-left: 5px solid #0e6b36; border-right: 0; }
.sheet-tabs > span { height: 25px; text-align: center; white-space: nowrap; border-right: 1px solid #ababab; }
.sheet-tabs .t1 { width: 70px; border-left: 1px solid #999; border-right: 0; }
.sheet-tabs .on { width: 98px; height: 27px; background: #fff; color: #217346; font-weight: bold; border: solid #999; border-width: 0 1px 0; border-bottom: 2px solid #217346; margin-top: -1px; padding-right: 2px; line-height: 22px; letter-spacing: -.2px; }
.t2 { width: 97px; } .t3 { width: 118px; } .t4 { width: 97px; } .t5 { width: 108px; } .t6 { width: 152px; }
.sheet-tabs .t3, .sheet-tabs .t2 { padding-right: 4px; }
.sheet-tabs .t4 { padding-right: 2px; }
.sheet-tabs .t7 { border: 0; width: 87px; padding-right: 3px; }
.t7 b { color: #217346; }
.plus { margin: 3px 0 0 -3px; }
.sheet-tabs .grip { padding-left: 17px; height: 27px; }
.hscroll { margin: 4px 0 0 auto; width: 605px; height: 19px; background: #dcdcdc; display: flex; }
.hscroll i { border-left-color: #666; border-right-color: #666; }
.hscroll .thumb { width: 532px; background: #fff; border: 1px solid #ababab; }
.hscroll .end { margin-left: auto; }
.sheet-tabs .hscroll { margin-right: 26px; flex: none; }

.status { flex: none; height: 27px; background: #f1f1f1; border-bottom: 1px solid #acb2bd; padding: 0 8px 0 8px; display: flex; align-items: center; font-size: 12.500px; color: #555; }
.count { margin-left: auto; margin-right: 31px; }
.status svg + svg { margin-left: 27px; }
.status svg.zoom { margin-left: 18px; }
.pct { margin-left: 14px; color: #aaa; }

.taskbar { flex: 1; background: linear-gradient(90deg, #e2edf7 0, #e4eff8 340px, #d3e1f8 500px, #d8dcf3 580px, #d5e3f7 800px, #d8dbee 950px, #d5e0f5 1200px, #d9daeb 1370px, #dfebf8 1530px, #e5f1f9 1700px, #e0edf8 100%); display: flex; align-items: center; color: #222; }
.weather { width: 558px; padding: 0 0 2px 28px; display: flex; align-items: center; gap: 12px; line-height: 20px; }
.weather small { font-size: 14px; line-height: 20px; display: block; color: #555; }
.sun { width: 24px; height: 24px; border-radius: 50%; background: linear-gradient(145deg, #efc33c, #f5660a); }
.search { width: 274px; height: 40px; margin-left: 17px; border-radius: 20px; background: #f3f6fc; border: 1px solid #c9d0df; display: flex; align-items: center; padding: 0 2px 0 13px; gap: 11px; font-size: 16px; color: #555; }
.scene { margin-left: auto; }
.apps { display: flex; margin-left: 6px; gap: 5px; }
.apps > div { width: 50px; height: 50px; border-radius: 5px; display: grid; place-items: center; position: relative; }
.apps svg { width: 30px; height: 30px; }
.run::after { content: ""; position: absolute; bottom: 1px; left: 21px; width: 8px; height: 4px; border-radius: 2px; background: #808490; }
.discord { background: #fbe4e8; }
.discord::after { background: #c4211d; }
.rec { position: absolute; right: 5px; top: 5px; width: 18px; height: 18px; border: 5px solid #ee5959; background: #fff; border-radius: 50%; }
.apps .excel { background: #edf0f9; width: 47px; margin-left: 1px; box-shadow: 1px 0 0 1px #d6d9e6; }
.excel::after { background: #0078d4; width: 20px; left: 14px; }
.tray { flex: 1; display: flex; align-items: center; line-height: 20px; font-size: 14px; height: 100%; padding-left: 182px; }
.lang { margin-left: 27px; width: 28px; }
.wifi { margin-left: 23px; } .mute { margin-left: 10px; } .batt { margin-left: 10px; }
.clock { width: 88px; text-align: right; letter-spacing: .1px; }
.bell { margin-left: 10px; }
.copilot { margin-left: 21px; position: relative; }
.copilot b { position: absolute; left: 7px; bottom: -1px; background: #ffc107; border-radius: 2px; width: 22px; height: 10px; font-size: 9px; line-height: 10px; text-align: center; color: #222; letter-spacing: 0; }
```

FILE: script.js
```js
// [text, drawn width in px] for the names in column B, starting at row 3
const names = [
  ["آلاء احمد فؤاد عبد الرحمن", 156], ["آلاء جبر احمد القواسمه", 137], ["آلاء درويش محمد عزازى", 146],
  ["آلاء عزمي اسماعيل ابو حماد", 162], ["آلاء محمد عبد المجيد ابو شارب", 188], ["آلاء هشام محمود المشارفه", 159],
  ["آلاء يونس ابراهيم الاتيم", 134], ["آمال يوسف عبد الله ابو ركب", 168], ["آمنه ابراهيم عبد الله ابو صهيبان", 184],
  ["آيات غالب احمد عطيه", 134], ["آيه ايمن اسماعيل الشيخ حسين", 181], ["آيه رائد سليمان الولايده", 136],
  ["آيه رياض محمد دعبور", 133], ["آيه سليم مصطفى البرقاوى", 151], ["آيه عبد الناصر ابراهيم الطويل", 171],
  ["آيه عطا سليمان ابو سبيله", 147], ["آيه قيس احمد القيسي", 127], ["آيه محمد عايش حجازي", 143],
  ["آيه محمد يوسف شبانه", 135], ["آيه نشأت محمد طشطوش", 157], ["أروى فؤاد محمود اسعد", 138],
  ["اباء احمد صالح عبد الله", 139], ["ابتسام ابراهيم حمدان صبح", 157], ["ابتسام احمد عبد السلام كساب", 179],
  ["ابتسام احمد محمد ابو منيزل", 166], ["ابتسام احمد محمود ابو خيران", 172], ["ابتسام تركي حسن عبد الله", 150],
  ["ابتسام توفيق موسى عواد", 144], ["ابتسام حامد احمد التلهوني", 155], ["ابتسام حسن عبد الله", 156]
];
const rtl = (text, width) => `<td class="rtl"><span data-width="${width}">${text}</span></td>`;

document.getElementById("rows").innerHTML = names.map(([name, width], i) => {
  const n = i + 102;
  return `<tr><th>${i + 3}</th><td class="id${i ? "" : " edit"}"><span>2000000${n}</span></td>
    <td class="name"><div><span data-width="${width}">${name}</span></div></td><td>email${n}@gmail.com</td>
    ${rtl("عمان", 31)}${rtl("الاولى", 33)}<td>FALSE</td><td></td><td>voter</td><td>FALSE</td>
    ${rtl("ذكر", 22)}${rtl("مسلم", 33)}${"<td></td>".repeat(6)}</tr>`;
}).join("");

document.querySelectorAll("[data-width]").forEach(el => {
  el.style.transform = `scaleX(${el.dataset.width / el.offsetWidth})`;
});

const icon = `<svg width="17" height="17" viewBox="0 0 17 17"><path d="M9 2.500h7v12H9z" fill="#fff" stroke="#217346"/><path d="M10 5h5M10 8h5M10 11h5" stroke="#217346" stroke-width="1.500"/><path d="M0 1.500L11 0v17L0 15.500z" fill="#217346"/><path d="M3 5l5 7M8 5l-5 7" stroke="#fff" stroke-width="1.600"/></svg>`;
document.getElementById("files").innerHTML = [
  ["Book1.xlsx", "8/13/2024 11:47 AM"],
  ["100_users_list (1).xlsx", "8/13/2024 3:09 PM"],
  ["<bdo dir=\"ltr\">09_</bdo><bdi>محافظة_الزرقاء</bdi>.xlsx", "8/13/2024 4:51 PM"]
].map(([file, time]) => `<li>${icon}<div>${file}&nbsp; [Original]<br>Version created last time the us...<br>${time}</div></li>`).join("");
```
